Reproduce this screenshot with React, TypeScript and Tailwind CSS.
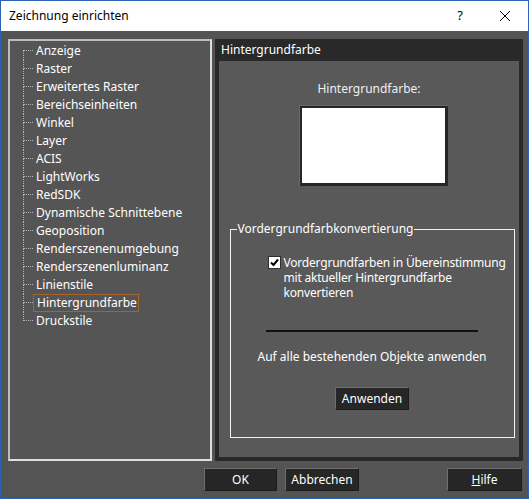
import React from "react";

const items = [
  "Anzeige",
  "Raster",
  "Erweitertes Raster",
  "Bereichseinheiten",
  "Winkel",
  "Layer",
  "ACIS",
  "LightWorks",
  "RedSDK",
  "Dynamische Schnittebene",
  "Geoposition",
  "Renderszenenumgebung",
  "Renderszenenluminanz",
  "Linienstile",
  "Hintergrundfarbe",
  "Druckstile",
];

const font = { fontFamily: '"Noto Sans", "Segoe UI", sans-serif' };

function TreeRow({ label, first, last, selected }: { label: string; first: boolean; last: boolean; selected: boolean }) {
  return (
    <div className="flex h-[18px] items-stretch">
      <div className="ml-[13px] flex w-[10px] flex-col">
        <div className={`h-[9px] border-b border-dotted border-[#b5b5b5] ${first ? "" : "border-l"}`} />
        <div className={`flex-1 border-dotted border-[#b5b5b5] ${last ? "" : "border-l"}`} />
      </div>
      <div
        className={`flex items-center pl-[3px] pr-[1px] leading-none ${
          selected ? "border border-[#a4652c] pl-[2px] pr-0" : ""
        }`}
      >
        {label}
      </div>
    </div>
  );
}

function Button({ children, className = "" }: { children: React.ReactNode; className?: string }) {
  return (
    <button
      className={`flex h-[23px] items-center justify-center border border-[#6e6e6e] border-b-[#1b1b1b] border-r-[#1b1b1b] bg-[#262626] text-[12px] text-white ${className}`}
    >
      {children}
    </button>
  );
}

export default function App() {
  return (
    <div
      className="flex h-[499px] w-[529px] flex-col border border-[#2c62b2] text-[12px] text-white"
      style={font}
    >
      <div className="flex h-[30px] items-center bg-white pl-[8px] text-black">
        <span className="flex-1 text-[12px]">Zeichnung einrichten</span>
        <span className="mr-[36px] text-[13px]">?</span>
        <svg width="12" height="12" viewBox="0 0 12 12" className="mr-[17px]">
          <path d="M1 1 L11 11 M11 1 L1 11" stroke="#000" strokeWidth="1" />
        </svg>
      </div>

      <div className="flex flex-1 flex-col bg-[#545454] pl-[7px] pt-[8px]">
        <div className="flex h-[422px] gap-[3px]">
          <div className="w-[204px] border-2 border-[#dedede] border-l-[#bdbdbd] border-t-[#bdbdbd] bg-[#555555] pt-[1px]">
            {items.map((it, i) => (
              <TreeRow
                key={it}
                label={it}
                first={i === 0}
                last={i === items.length - 1}
                selected={it === "Hintergrundfarbe"}
              />
            ))}
          </div>

          <div className="flex w-[308px] flex-col bg-[#292929] px-[4px] pb-[4px]">
            <div className="flex h-[22px] items-center pl-[2px] text-white">Hintergrundfarbe</div>
            <div className="flex flex-1 flex-col items-center bg-[#595959]">
              <div className="mt-[19px] leading-[18px] text-[#f0f0f0]">Hintergrundfarbe:</div>
              <div className="ml-[8px] mt-[7px] border-l border-t border-[#646c6c]">
                <div className="h-[80px] w-[148px] border-2 border-[#262626] border-b-[3px] border-r-[3px] bg-white" />
              </div>

              <div className="relative ml-[6px] mt-[43px] flex h-[209px] w-[285px] flex-col items-center border border-[#f2f2f2]">
                <div className="absolute left-[6px] top-[-9px] bg-[#595959] px-[1px] leading-[16px]">
                  Vordergrundfarbkonvertierung
                </div>
                <div className="ml-[37px] mt-[25px] flex gap-[3px] self-start">
                  <div className="mt-[1px] flex h-[13px] w-[13px] shrink-0 items-center justify-center border border-[#303030] bg-white">
                    <svg width="9" height="9" viewBox="0 0 9 9">
                      <path d="M1 4.5 L3.5 7 L8 1.5" stroke="#000" strokeWidth="2" fill="none" />
                    </svg>
                  </div>
                  <div className="flex w-[230px] shrink-0 flex-col tracking-[-0.2px]">
                    <span className="h-[15px] leading-[15px]">Vordergrundfarben in Übereinstimmung</span>
                    <span className="h-[15px] leading-[15px]">mit aktueller Hintergrundfarbe</span>
                    <span className="h-[15px] leading-[15px]">konvertieren</span>
                  </div>
                </div>
                <div className="mt-[30px] h-[2px] w-[212px] bg-[#111111]" />
                <div className="mt-[17px] leading-[16px]">Auf alle bestehenden Objekte anwenden</div>
                <Button className="mt-[22px] w-[74px]">Anwenden</Button>
              </div>
            </div>
          </div>
        </div>

        <div className="mt-[7px] flex">
          <Button className="ml-[196px] w-[73px]">OK</Button>
          <Button className="ml-[8px] w-[74px]">Abbrechen</Button>
          <Button className="ml-[88px] w-[75px]">
            <span>
              <span className="underline">H</span>ilfe
            </span>
          </Button>
        </div>
      </div>
    </div>
  );
}
